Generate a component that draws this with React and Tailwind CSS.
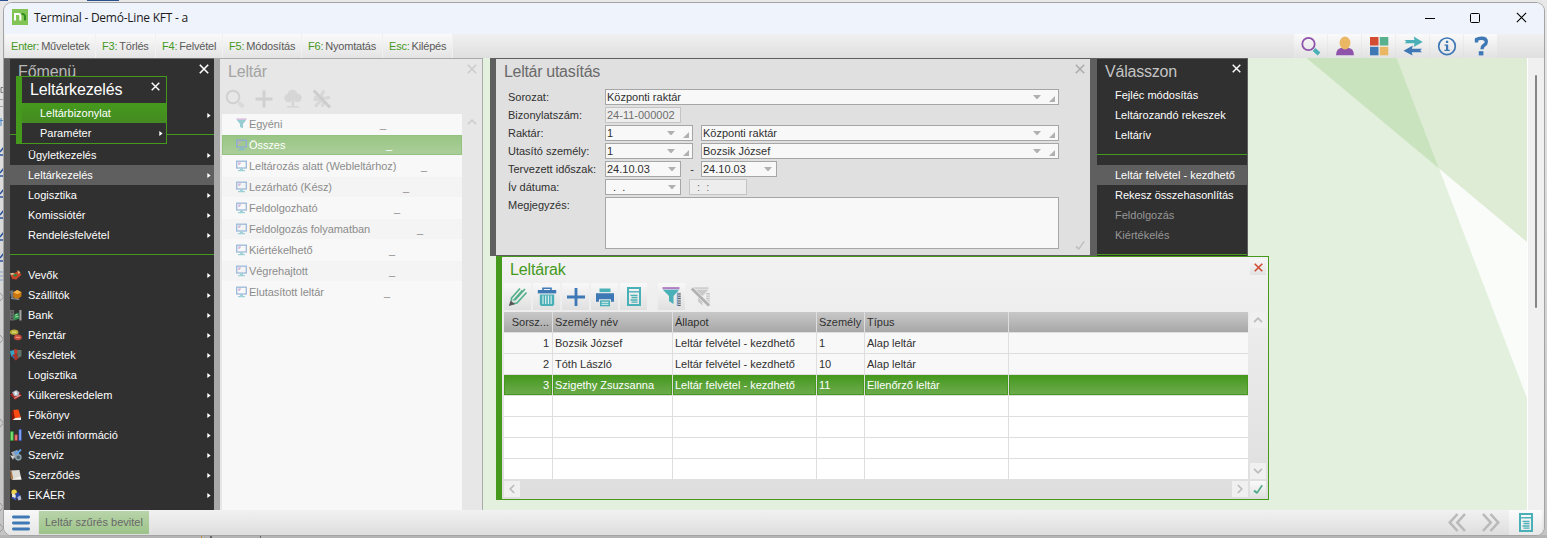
import React from "react";

const SHORTCUTS = [
  ["Enter:", "Műveletek", "w-[91px]"],
  ["F3:", "Törlés", "w-[60px]"],
  ["F4:", "Felvétel", "w-[67px]"],
  ["F5:", "Módosítás", "w-[79px]"],
  ["F6:", "Nyomtatás", "w-[81px]"],
  ["Esc:", "Kilépés", "w-[70px]"],
];

const MODULES = [
  ["Vevők", "customers"],
  ["Szállítók", "suppliers"],
  ["Bank", "bank"],
  ["Pénztár", "cash"],
  ["Készletek", "stock"],
  ["Logisztika", null],
  ["Külkereskedelem", "trade"],
  ["Főkönyv", "ledger"],
  ["Vezetői információ", "chart"],
  ["Szerviz", "service"],
  ["Szerződés", "contract"],
  ["EKÁER", "ekaer"],
];

const FILTERS = [
  ["Egyéni", 131],
  ["Összes", 137],
  ["Leltározás alatt (Webleltárhoz)", 172],
  ["Lezárható (Kész)", 154],
  ["Feldolgozható", 145],
  ["Feldolgozás folyamatban", 168],
  ["Kiértékelhető", 140],
  ["Végrehajtott", 140],
  ["Elutasított leltár", 135],
];

const ROWS = [
  ["1", "Bozsik József", "Leltár felvétel - kezdhető", "1", "Alap leltár", ""],
  ["2", "Tóth László", "Leltár felvétel - kezdhető", "10", "Alap leltár", ""],
  ["3", "Szigethy Zsuzsanna", "Leltár felvétel - kezdhető", "11", "Ellenőrző leltár", ""],
  ["", "", "", "", "", ""],
  ["", "", "", "", "", ""],
  ["", "", "", "", "", ""],
  ["", "", "", "", "", ""],
];

const GRID = "grid grid-cols-[48px_119px_143px_47px_143px_239px] gap-x-px";

function Cross({ className, size = 10, stroke = 1.6 }) {
  return (
    <svg width={size} height={size} viewBox="0 0 10 10" className={className} fill="none" stroke="currentColor" strokeWidth={stroke}>
      <path d="M0.8 0.8 9.2 9.2M9.2 0.8 0.8 9.2" />
    </svg>
  );
}

function Chevron({ dir }) {
  const d = {
    up: "M4 10.2 8 6.2 12 10.2",
    down: "M4 5.8 8 9.8 12 5.8",
    left: "M10.2 4 6.2 8 10.2 12",
    right: "M5.8 4 9.8 8 5.8 12",
  }[dir];
  return (
    <svg width="16" height="16" viewBox="0 0 16 16" fill="none" stroke="#bcbcbc" strokeWidth="1.7">
      <path d={d} />
    </svg>
  );
}

function Check({ color, className }) {
  return (
    <svg width="16" height="16" viewBox="0 0 16 16" className={className} fill="none" stroke={color}>
      <path d="M4 9.6 7.2 12" strokeWidth="2" />
      <path d="M6.8 12.3 12.2 4.2" strokeWidth="1.6" />
    </svg>
  );
}

function Arrow() {
  return (
    <svg width="4" height="6" viewBox="0 0 4 6">
      <path d="M0.3 0.9 3.6 3.5 0.3 6z" fill="#fff" />
    </svg>
  );
}

function ModuleIcon({ name }) {
  const art = {
    customers: (
      <>
        <path d="M0.5 6 8 2 11 5.500 6 10 2 9.500z" fill="#c8442a" />
        <path d="M0 4 3 3.500 5 5 1 6z" fill="#d9b98c" />
        <path d="M3 5.500 6 4.500 7 6.500 4 7.500z" fill="#2d8a3c" />
        <path d="M7 1 10 3 8 5z" fill="#e8b070" />
      </>
    ),
    suppliers: (
      <>
        <path d="M0 2 3 1 3 9 1 8z" fill="#6c7781" />
        <path d="M3 3 7 1 11 3 11 7 7 10 3 8z" fill="#c87610" />
        <path d="M3 3 7 1 11 3 7 5z" fill="#f6b347" />
        <path d="M1 9 9 10" stroke="#8592a0" />
      </>
    ),
    bank: (
      <>
        <path d="M0 1h4v10H0z" fill="#6a6a6a" />
        <path d="M1 3h2M1 6h2M1 9h2" stroke="#444" />
        <path d="M3 6 8 3 9 9 4 11z" fill="#2f8f4c" />
        <path d="M5 6 7 5M5 8 8 7" stroke="#a4dda8" />
        <path d="M9 1h2v10H9z" fill="#a0a4a2" />
      </>
    ),
    cash: (
      <>
        <ellipse cx="4" cy="3" rx="4" ry="2.6" fill="#b9ae38" />
        <path d="M2 3h4" stroke="#e8e08a" />
        <ellipse cx="7.500" cy="8" rx="3.8" ry="2.8" fill="#c84c3c" />
        <path d="M5.500 8h4" stroke="#f0a090" />
      </>
    ),
    stock: (
      <>
        <path d="M0 2 4 1 5 5 1 7z" fill="#36a3c4" />
        <path d="M4 0 8 1 7 5 4 4z" fill="#c83c2c" />
        <path d="M7 1 11 1 11 7 7 9z" fill="#60746a" />
        <path d="M2 6 6 4 8 9 5 11z" fill="#b03426" />
        <path d="M1 7 3 6 5 10z" fill="#2a6cae" />
      </>
    ),
    trade: (
      <>
        <path d="M0 5 5 10.500 11 6 8 2z" fill="#a32420" />
        <path d="M2 3 6 1 9 3 8 7 4 7z" fill="#a9b4c0" />
        <path d="M4 3 6 2 7 5 5 6z" fill="#eef3f8" />
        <path d="M4 9 10 6" stroke="#e6a49a" />
      </>
    ),
    ledger: (
      <>
        <path d="M3 1 8 0.500 10.500 8 4.500 9z" fill="#fb4a12" />
        <path d="M3 1 4.500 9 2 11 1.500 3z" fill="#8c1606" />
        <path d="M2.500 10.500 4.500 8.8 10.500 8 10.500 10.500z" fill="#f3efe8" />
      </>
    ),
    chart: (
      <>
        <path d="M0.500 2.500h2.6v8.500H0.500z" fill="#7ee07a" stroke="#2c9c30" strokeWidth="0.7" />
        <path d="M4.6 5.500h2.4v5.500H4.6z" fill="#f08080" stroke="#b03030" strokeWidth="0.7" />
        <path d="M8.6 0.500h2.2v10.500H8.6z" fill="#8cb0ff" stroke="#3454b8" strokeWidth="0.7" />
      </>
    ),
    service: (
      <>
        <path d="M1 3 7 1 9 5 4 9z" fill="#a2a8ae" />
        <path d="M5 2 6 5 10.500 0.500" stroke="#5ba0ea" strokeWidth="1.8" fill="none" />
        <circle cx="8" cy="8" r="2.500" fill="#52646c" stroke="#8ba8b4" strokeWidth="1.3" />
        <path d="M0 6 4 7 3 10.500z" fill="#d4d4d4" />
      </>
    ),
    contract: (
      <>
        <path d="M0.500 1.500 9 1 11 10 2 10.500z" fill="#dcdad4" />
        <path d="M0.500 1.500 1.500 1 3 9 2 10.500 0.500 9z" fill="#a9784c" />
        <path d="M3 10 11 10 10 7z" fill="#f5f4f0" />
      </>
    ),
    ekaer: (
      <>
        <circle cx="4" cy="3" r="2.6" fill="#f0d24c" />
        <path d="M2 4 6 6 5 9 2 8z" fill="#e8e4da" />
        <path d="M5 4 8 3 10 7 6 9z" fill="#2842a8" />
        <path d="M7 8 10 6 11 10 8 11z" fill="#aab7d8" />
        <path d="M2 8 6 10" stroke="#3c58c0" strokeWidth="1.500" />
      </>
    ),
  }[name];
  return (
    <svg width="12" height="12" viewBox="0 0 11.5 11.5" fill="none" className="shrink-0">
      {art}
    </svg>
  );
}

function MenuRow({ label, icon, active, submenu = true }) {
  return (
    <div className={active ? "flex h-5 items-center bg-[#5f5f5f] pr-[3px]" : "flex h-5 items-center pr-[3px]"}>
      <div className="flex w-[18px] shrink-0 items-center">{icon && <ModuleIcon name={icon} />}</div>
      <span className="flex-1 text-white">{label}</span>
      {submenu && <Arrow />}
    </div>
  );
}

function Divider() {
  return (
    <div className="h-5 pt-[9px]">
      <div className="h-px bg-[#45991c]" />
    </div>
  );
}

function MainMenu() {
  return (
    <section className="flex w-[210px] shrink-0 border-t border-[#6f6f6f] bg-[#303030]">
      <div className="flex w-[6px] flex-col bg-[#5f5f5f]" />
      <div className="flex-1">
        <header className="flex h-[46px] items-start justify-between pr-[5px] pl-2">
          <h2 className="mt-[3px] text-[16px] leading-[20px] tracking-[-0.1px] text-[#b9b9b9]">Főmenü</h2>
          <Cross className="mt-[5px] text-white" />
        </header>
        <MenuRow label="" />
        <Divider />
        <MenuRow label="Ügyletkezelés" />
        <MenuRow label="Leltárkezelés" active />
        <MenuRow label="Logisztika" />
        <MenuRow label="Komissiótér" />
        <MenuRow label="Rendelésfelvétel" />
        <Divider />
        {MODULES.map(([label, icon], i) => (
          <MenuRow key={i} label={label} icon={icon} />
        ))}
      </div>
    </section>
  );
}

function SubMenu() {
  return (
    <section className="absolute top-[18px] left-[12px] flex h-[68px] w-[151px] border border-l-0 border-[#45991c] bg-[#303030]">
      <div className="w-[6px] shrink-0 bg-[#45991c]" />
      <div className="flex-1">
        <header className="flex h-[26px] items-start justify-between pr-[6px] pl-2">
          <h2 className="mt-[3px] text-[16px] leading-[20px] tracking-[-0.15px] text-white">Leltárkezelés</h2>
          <Cross className="mt-[5px] text-white" size={9} />
        </header>
        <div className="flex h-5 items-center bg-linear-to-b from-[#45991c] to-[#448a22] pl-[18px] text-white">Leltárbizonylat</div>
        <div className="flex h-5 items-center justify-between pr-[3px] pl-[18px] text-white">
          <span>Paraméter</span>
          <Arrow />
        </div>
      </div>
    </section>
  );
}

function Monitor({ selected }) {
  return (
    <svg width="11" height="12" viewBox="0 0 11 12" className="shrink-0">
      <rect x="0.7" y="1.2" width="9.6" height="6.8" fill="none" stroke={selected ? "#8fa9d8" : "#9cb9d9"} strokeWidth="1.3" />
      <path d="M3 5V3h2" fill="none" stroke="#c9a6d2" strokeWidth="1.2" />
      <path d="M4 8.5h3V10h2v1.3H2V10h2z" fill={selected ? "#86bcc4" : "#9fd2d6"} />
    </svg>
  );
}

function FunnelSmall() {
  return (
    <svg width="11" height="12" viewBox="0 0 11 12" className="shrink-0">
      <path d="M0.5 1.2h10" stroke="#cbaed4" strokeWidth="1.2" />
      <path d="M0.8 2h9.4L7 6v4.2L4 9V6z" fill="#96cdd2" />
    </svg>
  );
}

function FilterPanel() {
  return (
    <section className="flex w-[269px] shrink-0 border-t border-r border-[#aaaaaa] bg-[#e7e7e7]">
      <div className="w-[6px] shrink-0 bg-[#a8a8a8]" />
      <div className="flex flex-1 flex-col">
        <header className="flex h-[27px] shrink-0 items-start justify-between pr-[5px] pl-2">
          <h2 className="mt-[3px] text-[16px] leading-[20px] tracking-[-0.2px] text-[#a3a3a3]">Leltár</h2>
          <Cross className="mt-[5px] text-[#cccccc]" />
        </header>
        <div className="flex h-[28px] shrink-0 gap-[9px] pt-[3px] pl-[5px]">
          <svg width="20" height="20" viewBox="0 0 20 20" fill="none">
            <circle cx="8" cy="8" r="6.3" stroke="#d0d0d0" strokeWidth="1.9" />
            <path d="M13.5 13.5 18.5 18" stroke="#dadada" strokeWidth="4" />
          </svg>
          <svg width="20" height="20" viewBox="0 0 20 20" stroke="#d0d0d0" strokeWidth="2.8">
            <path d="M10 1.5v17M1.5 10h17" />
          </svg>
          <svg width="20" height="20" viewBox="0 0 20 20" fill="#d6d6d6">
            <circle cx="9.5" cy="5.5" r="4.8" />
            <circle cx="5.5" cy="9" r="4.2" />
            <circle cx="14.5" cy="8.8" r="4.2" />
            <path d="M8.7 8h2.6v9.6H8.7zM5 17h10l2 1.6H3z" />
          </svg>
          <svg width="20" height="20" viewBox="0 0 20 20" fill="none">
            <path d="M12 1.5 8 9 12.5 9M2 8l6 2M18 8l-5 1.5M3 17.5 10 10.5M1.5 10.5h5M10 17.5 12 13" stroke="#d7d7d7" strokeWidth="3" />
            <path d="M1.8 1.5 18 18.5" stroke="#cdcdcd" strokeWidth="3" />
          </svg>
        </div>
        <div className="flex flex-1 pl-[2px]">
          <div className="w-[240px] bg-[#f8f8f8]">
            {FILTERS.map(([label, w], i) => {
              const selected = i === 1;
              const bg = selected
                ? "border border-[#94c27f] bg-linear-to-b from-[#99c585] to-[#abce9a] px-[13px] text-white"
                : i % 2 === 1
                  ? "bg-[#f4f4f4] px-[14px] text-[#8c8c8c]"
                  : "px-[14px] text-[#8c8c8c]";
              return (
                <div key={i} className={`mb-px flex h-5 items-center ${bg}`}>
                  {i === 0 ? <FunnelSmall /> : <Monitor selected={selected} />}
                  <span className="ml-[2px] shrink-0 tracking-[-0.05px] whitespace-nowrap" style={{ width: w }}>{label}</span>
                  <span>_</span>
                </div>
              );
            })}
          </div>
          <div className="ml-[2px] opacity-60">
            <Chevron dir="up" />
          </div>
        </div>
      </div>
    </section>
  );
}

function Drop({ corner }) {
  return (
    <span className="ml-auto flex items-center">
      <svg width="8" height="4" viewBox="0 0 8 4"><path d="M0 0h8L4.5 4h-1z" fill="#b0b0b0" /></svg>
      {corner && (
        <svg width="6" height="6" viewBox="0 0 6 6" className="mt-[3px] ml-2"><path d="M6 0v6H0z" fill="#b0b0b0" /></svg>
      )}
    </span>
  );
}

function Field({ w, children, drop, corner, disabled }) {
  const tone = disabled ? "border-[#c4c4c4] bg-[#ededed] text-[#6e6e6e]" : "border-[#a6a6a6] bg-[#f8f8f8] text-[#303030]";
  return (
    <div className={`flex h-4 shrink-0 items-center border pl-px whitespace-pre ${tone} ${w} ${corner ? "pr-[3px]" : "pr-[4px]"}`}>
      <span>{children}</span>
      {drop && <Drop corner={corner} />}
    </div>
  );
}

function FormRow({ label, children }) {
  return (
    <div className="flex h-[18px] items-start">
      <span className="w-[97px] shrink-0 leading-[16px] text-[#303030]">{label}</span>
      {children}
    </div>
  );
}

function OrderForm() {
  return (
    <section className="flex h-[198px] w-[600px] shrink-0 border-y border-[#5f5f5f] bg-[#e0e0e0]">
      <div className="w-[6px] shrink-0 bg-[#5f5f5f]" />
      <div className="flex flex-1 flex-col">
        <header className="flex h-[30px] items-start justify-between pr-[5px] pl-2">
          <h2 className="mt-[3px] text-[16px] leading-[20px] tracking-[-0.3px] text-[#6a6a6a]">Leltár utasítás</h2>
          <Cross className="mt-[5px] text-[#adadad]" />
        </header>
        <div className="flex justify-between pr-[2px] pl-3">
          <div>
            <FormRow label="Sorozat:"><Field w="w-[454px]" drop corner>Központi raktár</Field></FormRow>
            <FormRow label="Bizonylatszám:"><Field w="w-[76px]" disabled>24-11-000002</Field></FormRow>
            <FormRow label="Raktár:">
              <Field w="w-[88px]" drop corner>1</Field>
              <div className="w-2" />
              <Field w="w-[358px]" drop corner>Központi raktár</Field>
            </FormRow>
            <FormRow label="Utasító személy:">
              <Field w="w-[88px]" drop corner>1</Field>
              <div className="w-2" />
              <Field w="w-[358px]" drop corner>Bozsik József</Field>
            </FormRow>
            <FormRow label="Tervezett időszak:">
              <Field w="w-[76px]" drop>24.10.03</Field>
              <span className="w-5 pl-[2px] text-center leading-[17px] text-[#303030]">-</span>
              <Field w="w-[76px]" drop>24.10.03</Field>
            </FormRow>
            <FormRow label="Ív dátuma:">
              <Field w="w-[76px]" drop>{"  .  ."}</Field>
              <div className="w-2" />
              <Field w="w-[58px]" disabled>{"  :  :"}</Field>
            </FormRow>
            <FormRow label="Megjegyzés:">
              <div className="h-[52px] w-[454px] border border-[#a6a6a6] bg-[#f8f8f8]" />
            </FormRow>
          </div>
          <Check color="#c2c2c2" className="mt-[148px]" />
        </div>
      </div>
    </section>
  );
}

function ChoicePanel() {
  const item = "flex h-5 items-center pl-[18px]";
  return (
    <section className="flex h-[198px] w-[158px] shrink-0 overflow-hidden border-t border-r border-[#5f5f5f] bg-[#303030]">
      <div className="w-[7px] shrink-0 bg-[#5f5f5f]" />
      <div className="flex-1">
        <header className="flex h-[26px] items-start justify-between pr-[6px] pl-2">
          <h2 className="mt-[3px] text-[16px] leading-[20px] tracking-[-0.2px] text-[#c4c4c4]">Válasszon</h2>
          <Cross className="mt-[5px] text-white" size={9} />
        </header>
        <div className="whitespace-nowrap text-white">
          <div className={item}>Fejléc módosítás</div>
          <div className={item}>Leltározandó rekeszek</div>
          <div className={item}>Leltárív</div>
          <Divider />
          <div className={`${item} bg-[#5f5f5f]`}>Leltár felvétel - kezdhető</div>
          <div className={item}>Rekesz összehasonlítás</div>
          <div className={`${item} text-[#979797]`}>Feldolgozás</div>
          <div className={`${item} text-[#979797]`}>Kiértékelés</div>
          <Divider />
        </div>
      </div>
    </section>
  );
}

function ListIcon() {
  return (
    <svg width="14" height="19" viewBox="0 0 14 19" fill="none" stroke="#4ab0b7">
      <path d="M1 1h12v17H1z" strokeWidth="2" />
      <path d="M1 4.800h12" strokeWidth="1.400" />
      <path d="M3.500 8.300h7M4.500 10.500h6M3.500 13h7M4.500 15.200h6" strokeWidth="1.300" />
    </svg>
  );
}

function ToolButton({ children }) {
  return (
    <button className="flex size-[27px] items-center justify-center bg-linear-to-b from-[#f8f8f8] to-[#e0e0e0]">{children}</button>
  );
}

function StockTools() {
  return (
    <div className="flex h-[29px] gap-[2px] pl-[2px]">
      <ToolButton>
        <svg width="20" height="20" viewBox="0 0 20 20" fill="none">
          <path d="M3.5 14 3.5 11 12 1.5M5.5 13.5 14.5 3.2M5.2 16.6 9 16 18.5 5.5M7 13 17 2" stroke="#55b08c" strokeWidth="1.7" />
          <path d="M2.500 13.5 0.8 19 7 17.2z" fill="#555" />
        </svg>
      </ToolButton>
      <ToolButton>
        <svg width="20" height="20" viewBox="0 0 20 20" fill="none">
          <path d="M6 3.5V1.2h8v2.3" stroke="#3e78b5" strokeWidth="1.6" />
          <path d="M0.8 3h18.4v3.4H0.8z" fill="#3e78b5" />
          <path d="M2.8 7.5h14.4v9.8L16 19H4L2.8 17.3z" fill="#4ab0b7" />
          <path d="M6 8.5v8.5M8.7 8.5v8.5M11.4 8.5v8.5M14.1 8.5v8.5" stroke="#e6f3f3" strokeWidth="1.1" />
        </svg>
      </ToolButton>
      <ToolButton>
        <svg width="20" height="20" viewBox="0 0 20 20" stroke="#3e78b5" strokeWidth="2.8">
          <path d="M10 1v18M1 10h18" />
        </svg>
      </ToolButton>
      <ToolButton>
        <svg width="20" height="20" viewBox="0 0 20 20" fill="none">
          <path d="M4.5 1.5h11v3.6h-11z" fill="#4ab0b7" />
          <path d="M1 6.2h18v8.6h-3v-2.6H4v2.6H1z" fill="#3e78b5" />
          <path d="M5 13.3h10v6H5z" fill="#4ab0b7" />
          <path d="M6.5 15.3h7M6.5 17.3h7" stroke="#def0f1" strokeWidth="1" />
        </svg>
      </ToolButton>
      <ToolButton><ListIcon /></ToolButton>
      <div className="w-[7px]" />
      <ToolButton>
        <svg width="20" height="20" viewBox="0 0 20 20" fill="none">
          <path d="M0.5 1.2h17" stroke="#b07fc2" strokeWidth="2.2" />
          <path d="M0.8 2.8h16.4L11.5 9v8L7 14V9z" fill="#4ab0b7" />
          <path d="M15.300 5.5h3.700v13.500h-3.700z" fill="#c4c8ce" />
          <path d="M17.200 6.500v12.500" stroke="#58606e" strokeWidth="2.800" strokeDasharray="1 1.300" />
          <path d="M15.300 5.5v13.500" stroke="#5f8fc8" strokeWidth="0.8" />
        </svg>
      </ToolButton>
      <div className="flex size-[27px] items-center justify-center">
        <svg width="20" height="20" viewBox="0 0 20 20" fill="none">
          <path d="M2 1.2h15.5" stroke="#d0d0d0" strokeWidth="2" />
          <path d="M2 2.8h15.2L11.5 9v9.5L7 14.5V9z" fill="#c9c9c9" />
          <path d="M17 6v13" stroke="#c4c4c4" strokeWidth="3.6" strokeDasharray="1.4 1" />
          <path d="M0.8 1.5 18 18.5" stroke="#efefef" strokeWidth="4" />
          <path d="M0.8 1.5 18 18.5" stroke="#b2b2b2" strokeWidth="2.8" />
        </svg>
      </div>
    </div>
  );
}

function StockWindow() {
  const heads = ["Sorsz...", "Személy név", "Állapot", "Személy", "Típus", ""];
  return (
    <section className="absolute top-[198px] left-[492px] flex h-[244px] w-[773px] border border-l-0 border-[#45991c] bg-linear-to-b from-[#f2f2f2] to-[#dedede]">
      <div className="w-[6px] shrink-0 bg-[#45991c]" />
      <div className="flex flex-1 flex-col">
        <header className="flex h-[26px] items-start justify-between pr-[2px] pl-2">
          <h2 className="mt-[3px] text-[16px] leading-[20px] tracking-[-0.15px] text-[#45991c]">Leltárak</h2>
          <div className="mt-[2px] flex size-4 items-center justify-center bg-linear-to-b from-[#f6f6f6] to-[#e2e2e2]">
            <Cross className="text-[#d14b32]" size={9} stroke={1.8} />
          </div>
        </header>
        <StockTools />
        <div className="flex gap-[2px] pl-[2px]">
          <div className="w-[744px] bg-[#dedede]">
            <div className={`${GRID} h-5`}>
              {heads.map((h, i) => (
                <div key={i} className={`bg-linear-to-b from-[#c8c8c8] to-[#a8a8a8] pl-[2px] leading-[20px] whitespace-nowrap text-[#303030] ${i === 0 ? "pr-[3px] text-right" : ""}`}>{h}</div>
              ))}
            </div>
            {ROWS.map((row, r) => {
              const selected = r === 2;
              const tone = selected
                ? "border border-[#45991c] bg-linear-to-b from-[#45991c] to-[#6cab4b] pl-px leading-[18px] text-white"
                : r < 2
                  ? "bg-[#f8f8f8] pl-[2px] leading-[20px] text-[#303030]"
                  : "bg-white";
              const end = selected ? "pr-[2px] text-right" : "pr-[3px] text-right";
              return (
                <div key={r} className={`${GRID} mt-px h-5`}>
                  {row.map((c, i) => (
                    <div key={i} className={`whitespace-nowrap ${tone} ${i === 0 ? end : ""}`}>{c}</div>
                  ))}
                </div>
              );
            })}
          </div>
          <div className="flex flex-col justify-between">
            <div className="bg-[#f0f0f0]"><Chevron dir="up" /></div>
            <div className="bg-[#f0f0f0]"><Chevron dir="down" /></div>
          </div>
        </div>
        <div className="mt-[2px] flex pl-[2px]">
          <div className="bg-[#f0f0f0]"><Chevron dir="left" /></div>
          <div className="w-[712px]" />
          <div className="bg-[#f0f0f0]"><Chevron dir="right" /></div>
          <div className="ml-[2px] bg-linear-to-b from-[#fafafa] to-[#e2e2e2]"><Check color="#4faa88" /></div>
        </div>
      </div>
    </section>
  );
}

function TitleBar() {
  return (
    <div className="flex h-[31px] shrink-0 items-center bg-[#eff3fb] pl-2">
      <svg width="16" height="16" viewBox="0 0 16 16" className="-mt-[3px]">
        <rect width="16" height="16" fill="#82c556" />
        <path d="M3 11.5V5h3.400q2 0 2 2v4.500" fill="none" stroke="#fff" strokeWidth="2" />
        <path d="M9.500 5q3.500-.3 3.500 2.400v4.100" fill="none" stroke="#2f8f1e" strokeWidth="2" />
      </svg>
      <h1 className="mt-[-1px] ml-[6px] font-['Open_Sans','Noto_Sans',sans-serif] text-[12px] tracking-[-0.24px] text-[#1b1b1b]">Terminal - Demó-Line KFT - a</h1>
      <div className="-mt-[2px] mr-[17px] ml-auto flex items-center text-black">
        <svg width="10" height="10" viewBox="0 0 10 10" stroke="currentColor"><path d="M0 5.5h10" /></svg>
        <svg width="10" height="10" viewBox="0 0 10 10" fill="none" stroke="currentColor" className="ml-[35px]"><rect x="0.5" y="0.5" width="9" height="9" rx="1" /></svg>
        <div className="ml-[36px]"><Cross size={11} stroke={1} /></div>
      </div>
    </div>
  );
}

function AppTools() {
  const icons = [
    <>
      <circle cx="7.5" cy="8" r="6.2" fill="none" stroke="#8e54ab" strokeWidth="1.8" />
      <path d="M13 13.5 18 18" stroke="#4ab0b7" strokeWidth="4" />
    </>,
    <>
      <path d="M1 19.2q.4-6.6 5-7.2h8q4.6.6 5 7.2z" fill="#8e54ab" />
      <ellipse cx="10" cy="7" rx="5.4" ry="6.4" fill="#eab765" />
    </>,
    <>
      <rect x="1" y="1" width="8.5" height="8.5" fill="#d24d33" />
      <rect x="10.8" y="1" width="8.5" height="8.5" fill="#58b08c" />
      <rect x="1" y="10.8" width="8.5" height="8.5" fill="#3e78b5" />
      <rect x="10.8" y="10.8" width="8.5" height="8.5" fill="#eab765" />
    </>,
    <>
      <path d="M1.5 4h10l-.8-3.500 9 5.400-9 5 .8-3.600h-10l2-1.600z" fill="#4ab0b7" />
      <path d="M19 12.8H9l.8-3.200L.5 14.8l9 4.800-.7-3.300H19l-1.800-1.700z" fill="#3e78b5" />
    </>,
    <>
      <circle cx="10" cy="10.3" r="8.3" fill="none" stroke="#3e78b5" strokeWidth="1.7" />
      <path d="M8.9 4.8h2.3v2.3H8.900zM7.5 8.4h3.7v5.3h1.6v1.4H7.400v-1.4h1.6V9.800H7.500z" fill="#3e78b5" />
    </>,
    <>
      <path d="M5.5 6.5V3.5Q7.5 2.2 10.5 2.2q4.8.1 4.8 3.500 0 2.200-2.300 3.600-2 1.300-2 3.900" fill="none" stroke="#3e78b5" strokeWidth="3.4" />
      <rect x="7.8" y="15.2" width="4.6" height="4.2" fill="#3e78b5" />
    </>,
  ];
  return (
    <div className="mr-[46px] ml-auto flex">
      {icons.map((art, i) => (
        <div key={i} className="mr-px flex w-[33px] items-center justify-center bg-linear-to-b from-[#fafafa] to-[#e2e2e2]">
          <svg width="20" height="20" viewBox="0 0 20 20" className="-mt-px">{art}</svg>
        </div>
      ))}
    </div>
  );
}

function ShortcutBar() {
  return (
    <div className="flex h-[24px] shrink-0 bg-linear-to-b from-[#f0f0f0] to-[#dfdfdf] pl-px">
      {SHORTCUTS.map(([key, label, w], i) => (
        <div key={i} className={`flex items-center border-r border-[#f0f0f0] bg-linear-to-b from-[#fafafa] to-[#e4e4e4] pl-[6px] tracking-[-0.2px] whitespace-nowrap ${w}`}>
          <span className="text-[#45991c]">{key}</span>
          <span className="ml-[2px] text-[#5a5a5a]">{label}</span>
        </div>
      ))}
      <AppTools />
    </div>
  );
}

function StatusBar() {
  return (
    <div className="flex h-[25px] shrink-0 items-center bg-linear-to-b from-[#f1f1f1] to-[#dedede]">
      <div className="flex h-full w-[34px] items-center justify-center bg-linear-to-b from-[#f8f8f8] to-[#e6e6e6]">
        <svg width="18" height="16" viewBox="0 0 18 16" stroke="#3e78b5" strokeWidth="2.8" strokeLinecap="round"><path d="M1.400 2h15.200M1.400 8h15.200M1.400 14h15.200" /></svg>
      </div>
      <div className="ml-px flex h-[23px] w-[110px] items-center bg-linear-to-b from-[#b8d4aa] to-[#9cc388] pl-[6px] whitespace-nowrap text-[#686868]">Leltár szűrés bevitel</div>
      <div className="ml-auto flex h-full items-center gap-[16px]">
        <svg width="18" height="19" viewBox="0 0 18 19" fill="none" stroke="#b9b9b9" strokeWidth="2.6"><path d="M9.500 1 1.800 9.500 9.500 18M17 1 9.300 9.500 17 18" /></svg>
        <svg width="18" height="19" viewBox="0 0 18 19" fill="none" stroke="#b9b9b9" strokeWidth="2.6"><path d="M1 1 8.700 9.500 1 18M8.500 1 16.200 9.500 8.500 18" /></svg>
      </div>
      <div className="mr-[2px] ml-[9px] flex h-full w-[33px] items-center justify-center bg-linear-to-b from-[#fbfbfb] to-[#e8e8e8]"><ListIcon /></div>
    </div>
  );
}

function Workspace() {
  return (
    <div className="relative flex h-[452px] shrink-0 bg-[#e3f0dd]">
      <svg className="absolute top-0 left-[1243px]" width="280" height="452" viewBox="0 0 280 452">
        <path d="M149 0H280V184L192 110.500z" fill="#dfecd5" />
        <path d="M59.500 0H149.500L192 110.500z" fill="#cae3bf" />
        <path d="M192 110.500 280 184V340z" fill="#fafcfa" />
      </svg>
      <MainMenu />
      <FilterPanel />
      <div className="relative ml-[7px] flex items-start">
        <OrderForm />
        <ChoicePanel />
      </div>
      <div className="ml-auto w-[17px] border-l border-white bg-[#f0f0f0] pt-[17px] pl-[7px]">
        <div className="h-[233px] w-[2px] rounded-full bg-[#858585]" />
      </div>
      <SubMenu />
      <StockWindow />
    </div>
  );
}

function DesktopEdge() {
  return (
    <svg width="4" height="532" viewBox="0 0 4 532" className="shrink-0" fill="none">
      <path d="M0 96.500h4M0 103.500h4" stroke="#a0a4a8" />
      <path d="M3 84.500H1v5h2" stroke="#777" />
      <path d="M1 115v8M0 117.500h3" stroke="#4a84c4" />
      {[144, 165, 186, 207, 229, 250].map((y) => (
        <path key={y} d={`M0 ${y + 5}L4 ${y}M0 ${y + 8}h4`} stroke="#2b549c" strokeWidth="1.5" />
      ))}
      <path d="M0 269h4M0 273h4M0 277h4" stroke="#8aa4cc" />
      {[294, 336, 420, 504, 525].map((y) => (
        <path key={y} d={`M0 ${y - 4}L3.500 ${y}L0 ${y + 4}`} stroke="#9a9a9a" />
      ))}
    </svg>
  );
}

export default function App() {
  return (
    <div className="h-[538px] w-[1547px] overflow-hidden bg-linear-to-b from-[#e8e8e8] to-[#c4c4c4] font-['Liberation_Sans',Arial,sans-serif] text-[11px]">
      <div className="flex h-[3px] items-start">
        <div className="h-px w-2 bg-[#2b4f8f]" />
        <div className="ml-[79px] h-px w-8 bg-[#2b4f8f]" />
      </div>
      <div className="flex">
        <DesktopEdge />
        <main className="flex h-[532px] w-[1540px] shrink-0 flex-col overflow-hidden rounded-[8px] bg-[#f0f0f0] shadow-[0_0_0_1px_#a4a4a4]">
          <TitleBar />
          <ShortcutBar />
          <Workspace />
          <StatusBar />
        </main>
      </div>
      <div className="flex h-[3px] bg-[#b4b4b4] pt-px pl-[201px]">
        <div className="h-[2px] w-px bg-[#c98a3a]" />
        <div className="ml-[8px] h-[2px] w-[2px] bg-[#666]" />
        <div className="ml-[48px] h-[2px] w-px bg-[#666]" />
      </div>
    </div>
  );
}
